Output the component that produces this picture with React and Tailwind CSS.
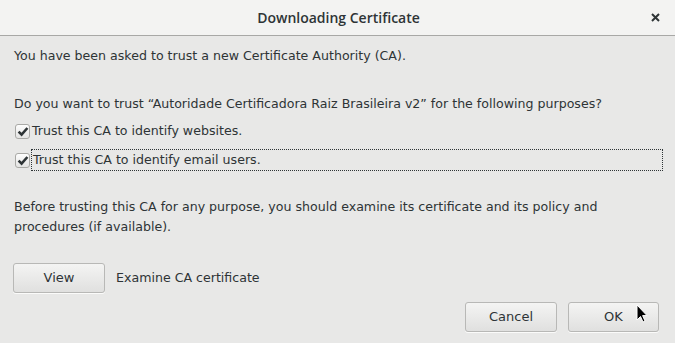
import React from 'react';

const Check = () => (
  <span className="w-[15px] h-[15px] rounded-[3px] border border-[#a9a9a6] bg-gradient-to-b from-[#fdfdfd] to-[#e4e4e3] flex items-center justify-center shrink-0">
    <svg width="12" height="11" viewBox="0 0 12 11">
      <path d="M1.6 5.6 L4.6 8.6 L10.4 2" fill="none" stroke="#2e3436" strokeWidth="2.6" />
    </svg>
  </span>
);

const Button = ({ children, className = '' }) => (
  <button className={`h-[30px] rounded-[3px] border border-[#b8b8b6] bg-gradient-to-b from-[#f4f4f3] to-[#e0e0df] text-[#2e3436] text-[13px] shadow-[0_1px_0_rgba(255,255,255,0.8)] ${className}`}>
    {children}
  </button>
);

export default function App() {
  return (
    <div className="w-[675px] h-[343px] bg-[#e8e8e7] flex flex-col text-[#2e3436] overflow-hidden relative" style={{ fontFamily: '"DejaVu Sans", sans-serif' }}>
      <div className="h-[36px] bg-[#f3f3f2] border-b border-[#a8a8a6] flex items-center justify-center relative shrink-0">
        <span className="text-[14px] font-semibold text-[#2e3436] pl-[2px]" style={{ fontFamily: '"Open Sans", sans-serif' }}>Downloading Certificate</span>
        <svg className="absolute right-[15px] top-[13px]" width="9" height="9" viewBox="0 0 9 9">
          <path d="M1 1 L8 8 M8 1 L1 8" stroke="#2e3436" strokeWidth="2" />
        </svg>
      </div>
      <div className="flex flex-col px-[14px] text-[12.6px] leading-[20px]">
        <p className="mt-[10px]">You have been asked to trust a new Certificate Authority (CA).</p>
        <p className="mt-[28px]">Do you want to trust “Autoridade Certificadora Raiz Brasileira v2” for the following purposes?</p>
        <div className="mt-[7px] flex items-center gap-[2px] h-[20px] ml-[1px]">
          <Check />
          <span>Trust this CA to identify websites.</span>
        </div>
        <div className="mt-[8px] flex items-center gap-[1px] h-[22px] ml-[1px]">
          <Check />
          <span className="flex-1 h-[22px] flex items-center border border-dotted border-[#2e3436] -mr-[2px] pl-[1px]">Trust this CA to identify email users.</span>
        </div>
        <p className="mt-[26px]">Before trusting this CA for any purpose, you should examine its certificate and its policy and procedures (if available).</p>
        <div className="mt-[26px] flex items-center gap-[11px] -ml-[1px]">
          <Button className="w-[92px]">View</Button>
          <span>Examine CA certificate</span>
        </div>
      </div>
      <div className="flex justify-end gap-[11px] mt-[9px] pr-[16px]">
        <Button className="w-[92px]">Cancel</Button>
        <Button className="w-[91px]">OK</Button>
      </div>
      <svg className="absolute left-[636px] top-[304px]" width="12" height="20" viewBox="0 0 12 20">
        <path d="M1 1 L1 16 L4.5 12.5 L7 18 L9 17 L6.6 11.6 L11 11.6 Z" fill="#000" stroke="#fff" strokeWidth="1" />
      </svg>
    </div>
  );
}
